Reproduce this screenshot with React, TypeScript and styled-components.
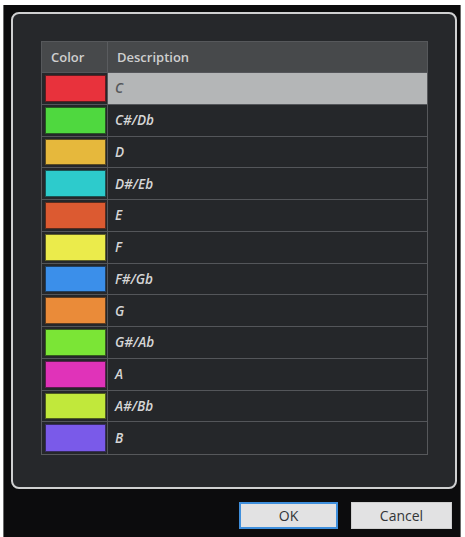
import React from 'react';
import styled, { createGlobalStyle } from 'styled-components';

const GlobalStyle = createGlobalStyle`
  html, body {
    margin: 0;
    padding: 0;
    background: #ffffff;
  }
  body {
    font-family: 'Open Sans', 'Noto Sans', sans-serif;
  }
`;

const notes = [
  { name: 'C', color: '#e8323c' },
  { name: 'C#/Db', color: '#4fd83f' },
  { name: 'D', color: '#e6b83c' },
  { name: 'D#/Eb', color: '#2dcbcc' },
  { name: 'E', color: '#dc5a31' },
  { name: 'F', color: '#ebeb4b' },
  { name: 'F#/Gb', color: '#3b8fea' },
  { name: 'G', color: '#ea8b39' },
  { name: 'G#/Ab', color: '#7be536' },
  { name: 'A', color: '#e033b9' },
  { name: 'A#/Bb', color: '#c1e83b' },
  { name: 'B', color: '#7a5ae9' },
];

const Window = styled.div`
  margin: 5px 0 0 3px;
  width: 458px;
  height: 532px;
  box-sizing: border-box;
  background: #0c0c0d;
  border-left: 1px solid #6a6a6a;
  border-right: 1px solid #6a6a6a;
  padding: 7px 3px 0 7px;
  display: flex;
  flex-direction: column;
`;

const Panel = styled.div`
  height: 477px;
  box-sizing: border-box;
  border: 2px solid #cfd0d1;
  border-radius: 8px;
  background: #26282b;
  padding: 27px 27px 0 28px;
`;

const Table = styled.div`
  border: 1px solid #56585b;
  display: flex;
  flex-direction: column;
`;

const Row = styled.div<{ $header?: boolean }>`
  display: grid;
  grid-template-columns: 66px 1fr;
  height: ${({ $header }) => ($header ? '31px' : '31.75px')};
  box-sizing: border-box;
  border-bottom: 1px solid #54565a;
  background: ${({ $header }) => ($header ? '#47494b' : '#25272a')};
  &:last-child {
    border-bottom: none;
  }
`;

const HeadCell = styled.div`
  display: flex;
  align-items: center;
  padding-left: 9px;
  color: #cfcfcf;
  font-size: 13px;
  font-weight: 600;
  border-right: 1px solid #5a5c5f;
  &:last-child {
    border-right: none;
  }
`;

const ColorCell = styled.div`
  border-right: 1px solid #55575a;
  padding: 2px 1px 2px 3px;
  box-sizing: border-box;
`;

const Swatch = styled.div`
  height: 100%;
  box-sizing: border-box;
  border: 1px solid rgba(20, 20, 20, 0.65);
`;

const NameCell = styled.div<{ $selected?: boolean }>`
  display: flex;
  align-items: center;
  padding-left: 7px;
  font-size: 13.5px;
  font-style: italic;
  font-weight: 600;
  color: ${({ $selected }) => ($selected ? '#55575a' : '#d6d6d6')};
  background: ${({ $selected }) => ($selected ? '#b4b6b7' : 'transparent')};
`;

const Footer = styled.div`
  display: flex;
  justify-content: flex-end;
  gap: 13px;
  padding: 13px 5px 0 0;
`;

const Button = styled.button<{ $focused?: boolean }>`
  width: ${({ $focused }) => ($focused ? '99px' : '101px')};
  height: 27px;
  box-sizing: border-box;
  background: #e2e2e3;
  border: ${({ $focused }) => ($focused ? '1px solid #dfe6ee' : '1px solid #cfcfcf')};
  outline: ${({ $focused }) => ($focused ? '2px solid #3f8fdc' : 'none')};
  outline-offset: -2px;
  font-family: 'Open Sans', 'Noto Sans', sans-serif;
  font-size: 14px;
  color: #333538;
  padding: 0;
  cursor: pointer;
`;

export default function App() {
  return (
    <>
      <GlobalStyle />
      <Window>
        <Panel>
          <Table>
            <Row $header>
              <HeadCell>Color</HeadCell>
              <HeadCell>Description</HeadCell>
            </Row>
            {notes.map((n, i) => (
              <Row key={n.name}>
                <ColorCell>
                  <Swatch style={{ background: n.color }} />
                </ColorCell>
                <NameCell $selected={i === 0}>{n.name}</NameCell>
              </Row>
            ))}
          </Table>
        </Panel>
        <Footer>
          <Button $focused>OK</Button>
          <Button>Cancel</Button>
        </Footer>
      </Window>
    </>
  );
}
